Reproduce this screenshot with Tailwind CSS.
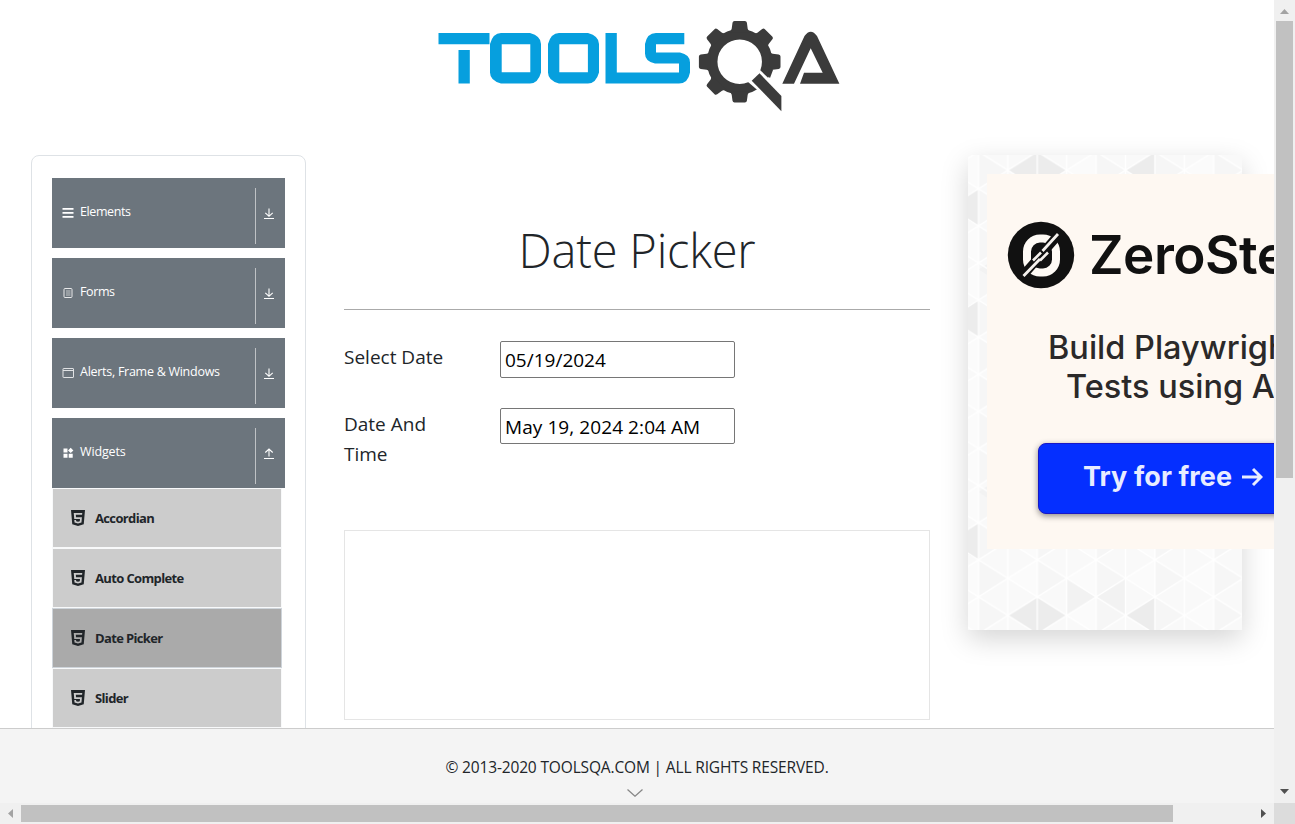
<!DOCTYPE html>
<html lang="en">
<head>
<meta charset="utf-8">
<title>Date Picker</title>
<script src="https://cdn.jsdelivr.net/npm/@tailwindcss/browser@4"></script>
</head>
<body class="h-[824px] w-[1295px] overflow-hidden bg-white font-['Open_Sans',sans-serif] text-[#212529]">
<svg class="hidden">
  <symbol id="html5" viewBox="0 0 32 32"><path fill="currentColor" d="M2 0h28l-2.500 28.500L16 32 4.500 28.500zM24.500 6h-17l1 12h11.500l-.4 4.400-3.600 1-3.700-1-.2-2.400H8.600l.5 5.200 6.900 2 6.900-2 .9-10.800H12l-.3-4.700h12.500z"/></symbol>
  <symbol id="down" viewBox="0 0 10 11"><path d="M0 10.500h10" stroke="currentColor" fill="none"/><path d="M5 .5v7.500M1.300 4.800L5 8.300l3.700-3.500" stroke="currentColor" stroke-width="1.100" fill="none"/></symbol>
  <symbol id="up" viewBox="0 0 10 11"><path d="M0 10.500h10" stroke="currentColor" fill="none"/><path d="M5 8.500V1M1.300 4.500L5 1l3.700 3.500" stroke="currentColor" stroke-width="1.100" fill="none"/></symbol>
</svg>
<div class="grid h-full grid-cols-[1274px_21px] grid-rows-[803px_21px]">
  <div class="flex h-[803px] flex-col overflow-hidden">
    <header class="flex h-[155px] shrink-0 pl-[437px] pt-5">
      <svg class="h-[93px] w-[404px]" viewBox="437 20 404 93">
        <g fill="#069fde">
          <path d="M438.500 33h51v11.300h-51zM458.500 50h11.300v33.600h-11.300z"/>
          <path fill-rule="evenodd" d="M501 33h29q11 3 11 11v28.600q-3 11-11 11h-29q-11-3-11-11V44q3-11 11-11zM501.700 44.300v28h28.600v-28z"/>
          <path fill-rule="evenodd" d="M559 33h29q11 3 11 11v28.600q-3 11-11 11h-29q-11-3-11-11V44q3-11 11-11zM559.300 44.300v28h28.600v-28z"/>
          <path d="M605.500 33h11.300v39.600H679v-9h-24q-10-2-10-10V44q2-11 11-11h28.300v11.300H656v8.300h24q10 2 10 10v10q-2 11-11 11h-73.500z"/>
        </g>
        <g fill="#3b3b3b">
          <g transform="translate(739.700 61.700)">
            <circle r="27.500" fill="none" stroke="#3b3b3b" stroke-width="10.500"/>
            <path id="tooth" d="M-11-29.500q2.500-1 3-3.500l.8-6q.3-1.800 2-1.800H5.200q1.700 0 2 1.800l.8 6q.5 2.500 3 3.500z"/>
            <use href="#tooth" transform="rotate(45)"/><use href="#tooth" transform="rotate(90)"/><use href="#tooth" transform="rotate(180)"/><use href="#tooth" transform="rotate(225)"/><use href="#tooth" transform="rotate(270)"/><use href="#tooth" transform="rotate(315)"/>
          </g>
          <path fill="#fff" d="M747.500 81.500L759.500 69.500 785 94v20z"/>
          <path d="M751.700 80.700l7.800-7.400 21.900 22.700v15.300z"/>
          <path d="M761 70l9 8 3-8-5-6z"/>
          <path d="M782.300 83.700L804.500 36q6.200-8.500 12.500 0l22.400 47.700H800l4-11h18.700L810.700 48.300 794 83.700z"/>
        </g>
      </svg>
    </header>
    <div class="flex h-[573px] shrink-0">
      <aside class="ml-[31px] h-[700px] w-[275px] shrink-0 rounded-lg border border-[#dee2e6] px-5 pt-[22px] text-[12.500px] text-white">
        <div class="flex flex-col gap-2.5">
          <div class="flex h-[70px] w-[233px] items-center bg-[#6c757d] pl-2.5">
            <svg class="mr-1.5 h-3 w-3" viewBox="0 0 12 12" fill="#fff"><path d="M.5 1h11v1.800H.5zM.5 5h11v1.800H.5zM.5 9h11v1.800H.5z"/></svg>
            <span class="mb-px grow tracking-[-0.400px]">Elements</span>
            <div class="mt-[5px] flex h-14 w-[30px] items-start border-l border-[#bfc2c5] pl-2 pt-5"><svg class="h-[11px] w-2.5"><use href="#down"/></svg></div>
          </div>
          <div class="flex h-[70px] w-[233px] items-center bg-[#6c757d] pl-2.5">
            <svg class="mr-1.5 h-3 w-3" viewBox="0 0 12 12" fill="none" stroke="#e8e9ea"><rect x="2" y="1.500" width="8" height="9" rx="1"/><path stroke-width=".7" d="M4 4h4.500M4 6h4.500M4 8h4.500"/></svg>
            <span class="mb-px grow tracking-[-0.400px]">Forms</span>
            <div class="mt-[5px] flex h-14 w-[30px] items-start border-l border-[#bfc2c5] pl-2 pt-5"><svg class="h-[11px] w-2.5"><use href="#down"/></svg></div>
          </div>
          <div class="flex h-[70px] w-[233px] items-center bg-[#6c757d] pl-2.5">
            <svg class="mr-1.5 h-3 w-3" viewBox="0 0 12 12" fill="none" stroke="#e0e2e4"><rect x="1" y="1.500" width="10.500" height="9" rx=".5"/><path d="M1 3.500h10.500"/></svg>
            <span class="mb-px grow tracking-[-0.270px]">Alerts, Frame &amp; Windows</span>
            <div class="mt-[5px] flex h-14 w-[30px] items-start border-l border-[#bfc2c5] pl-2 pt-5"><svg class="h-[11px] w-2.5"><use href="#down"/></svg></div>
          </div>
          <div class="flex h-[70px] w-[233px] items-center bg-[#6c757d] pl-2.5">
            <svg class="mr-1.5 h-3 w-3" viewBox="0 0 12 12" fill="#fff"><path d="M1.500 1.500h4v4h-4zM1.500 6.800h4v4h-4zM6.700 6.800h4v4h-4zM8.700.7l2.700 2.700-2.700 2.700L6 3.400z"/></svg>
            <span class="mb-px grow tracking-[-0.150px]">Widgets</span>
            <div class="mt-[5px] flex h-14 w-[30px] items-start border-l border-[#bfc2c5] pl-2 pt-5"><svg class="h-[11px] w-2.5"><use href="#up"/></svg></div>
          </div>
        </div>
        <ul class="w-[230px] text-[13px] font-bold tracking-[-0.640px] text-[#212529]">
          <li class="flex h-[60px] items-center border border-[#f8f9fa] bg-[#ccc] pl-[17px]"><svg class="mr-[9px] h-4 w-4"><use href="#html5"/></svg><span class="mt-0.5">Accordian</span></li>
          <li class="flex h-[60px] items-center border border-[#f8f9fa] bg-[#ccc] pl-[17px]"><svg class="mr-[9px] h-4 w-4"><use href="#html5"/></svg><span class="mt-0.5">Auto Complete</span></li>
          <li class="flex h-[60px] items-center border border-[#ced4da] bg-[#aaa] pl-[17px]"><svg class="mr-[9px] h-4 w-4"><use href="#html5"/></svg><span class="mt-0.5">Date Picker</span></li>
          <li class="flex h-[60px] items-center border border-[#f8f9fa] bg-[#ccc] pl-[17px]"><svg class="mr-[9px] h-4 w-4"><use href="#html5"/></svg><span class="mt-0.5">Slider</span></li>
        </ul>
      </aside>
      <main class="ml-[38px] w-[586px] shrink-0 pt-[65px]">
        <h1 class="h-[90px] border-b border-[#aaa] text-center text-[47px] font-light leading-[60px] tracking-[-0.200px]">Date Picker</h1>
        <div class="mt-[31px] flex h-[67px] text-[19px] leading-[30px]">
          <label class="w-[156px] pt-px"><span>Select Date</span></label>
          <input class="h-[37px] w-[235px] rounded-[2px] border border-[#767676] px-1 text-black" value="05/19/2024">
        </div>
        <div class="flex h-[122px] text-[19px] leading-[30px]">
          <label class="w-[156px] pr-10 pt-px"><span>Date And Time</span></label>
          <input class="h-9 w-[235px] rounded-[2px] border border-[#767676] px-1 pt-px tracking-[0.080px] text-black" value="May 19, 2024 2:04 AM">
        </div>
        <div class="h-[190px] border border-[#e5e5e5]"></div>
      </main>
      <aside class="relative ml-[38px] h-[475px] w-[274px] shrink-0 shadow-[0_9px_26px_rgba(0,0,0,0.170)]">
        <svg class="h-full w-full bg-[#f9f9f9]" viewBox="968 155 274 475">
          <defs>
            <pattern id="facets" patternUnits="userSpaceOnUse" x="978.500" y="188.800" width="58.800" height="37.100"><path fill="#f6f6f6" d="M0 0l29.400 18.550L0 37.100z"/><path fill="#fbfbfb" d="M29.400 18.550L58.800 0v37.100z"/></pattern>
            <pattern id="lines" patternUnits="userSpaceOnUse" x="978.500" y="188.800" width="58.800" height="37.100"><path fill="none" stroke="#fff" stroke-width="1.300" d="M0 0v37.100M29.400 0v37.100M58.800 0v37.100M0 0l58.800 37.100M58.800 0L0 37.100"/></pattern>
          </defs>
          <rect x="968" y="155" width="274" height="475" fill="url(#facets)"/>
          <path fill="#ececec" d="M1007.900 615.400L1037.300 596.900v37.100zM1066.700 615.400L1037.300 596.900v37.100zM1125.500 615.400L1154.900 596.900v37.100zM1007.900 170.200L1037.300 151.700v37.100zM1066.700 170.200L1037.300 151.700v37.100zM1125.500 170.200L1154.900 151.700v37.100zM968 195l10.500-6v37l-10.500-6zM968 306l10.500-6v37l-10.500-6zM968 529l10.500-6v37l-10.500-6z"/>
          <path fill="#f2f2f2" d="M1066.700 578.300v37.100l29.400-18.500zM1125.500 578.300v37.100l-29.400-18.500zM987.500 264l-9 5.500 9 5.500zM987.500 486l-9 6 9 6z"/>
          <rect x="968" y="155" width="274" height="475" fill="url(#lines)"/>
        </svg>
        <div class="absolute left-[19px] top-[19px] h-[375px] w-[375px] bg-[#fef8f2] font-['Inter',sans-serif]">
          <div class="flex h-[155px] items-center pl-5 pt-[7px]">
            <svg class="h-[68px] w-[68px]" viewBox="0 0 68 68"><circle cx="34" cy="34" r="33.200" fill="#111"/><rect x="20" y="17.500" width="29" height="34" rx="13" fill="none" stroke="#fefaf5" stroke-width="8"/><path stroke="#111" stroke-width="9" d="M13 58L53 12"/><path d="M16.500 55L33 38M35.500 30L51 13" stroke="#f5f1ed" stroke-width="2.800"/><path d="M26 39.500l8-8M33 39.500l8-8" stroke="#f5f1ed" stroke-width="2.600"/></svg>
            <span class="ml-[14px] mt-0.5 text-[53px] font-semibold tracking-[-0.500px] text-[#111]">ZeroStep</span>
          </div>
          <div class="-mt-px flex h-[114px] flex-col whitespace-nowrap text-[32.500px] font-medium leading-[39px] text-[#2b2929]">
            <span class="ml-[61px]">Build Playwright</span>
            <span class="ml-[79px]">Tests using AI</span>
          </div>
          <div class="ml-[51px] mt-px flex h-[71px] w-[280px] items-center rounded-lg border border-[#1717c8] bg-[#052fff] pl-11 text-[27px] font-bold tracking-[0.100px] text-[#e8ecff] shadow-[0_2px_6px_rgba(0,0,0,0.450)]">
            <span class="mb-0.5">Try for free</span>
            <svg class="mb-1 ml-[9px] h-5 w-[22px]" viewBox="0 0 22 20" fill="none" stroke="#e8ecff" stroke-width="3"><path d="M1 10h19M12 2l8 8-8 8"/></svg>
          </div>
        </div>
      </aside>
    </div>
    <footer class="relative flex h-[75px] shrink-0 flex-col items-center border-t border-[#ccc] bg-[#f4f4f4] pt-[26px]">
      <span class="text-[15.500px] leading-6 tracking-[-0.150px]">© 2013-2020 TOOLSQA.COM | ALL RIGHTS RESERVED.</span>
      <svg class="mr-1 mt-2.5 h-2 w-4" viewBox="0 0 16 8" fill="none" stroke="#888" stroke-width="1.300"><path d="M.5.500L8 7.200 15.500.500"/></svg>
    </footer>
  </div>
  <div class="flex flex-col items-center bg-[#f0f0f0]">
    <svg class="h-[21px] w-[21px] shrink-0" viewBox="0 0 21 21"><path fill="#a3a3a3" d="M6 14h9l-4.500-5z"/></svg>
    <div class="h-[457px] w-[17px] bg-[#c1c1c1]"></div>
    <div class="grow"></div>
    <svg class="h-[21px] w-[21px] shrink-0" viewBox="0 0 21 21"><path fill="#505050" d="M6 7h9l-4.500 5z"/></svg>
  </div>
  <div class="flex items-center bg-[#f0f0f0]">
    <svg class="h-[21px] w-[21px] shrink-0" viewBox="0 0 21 21"><path fill="#a3a3a3" d="M13 6v9l-5-4.500z"/></svg>
    <div class="h-[17px] w-[1152px] bg-[#c1c1c1]"></div>
    <div class="grow"></div>
    <svg class="h-[21px] w-[21px] shrink-0" viewBox="0 0 21 21"><path fill="#505050" d="M8 6v9l5-4.500z"/></svg>
  </div>
  <div class="bg-[#dcdcdc]"></div>
</div>
</body>
</html>
